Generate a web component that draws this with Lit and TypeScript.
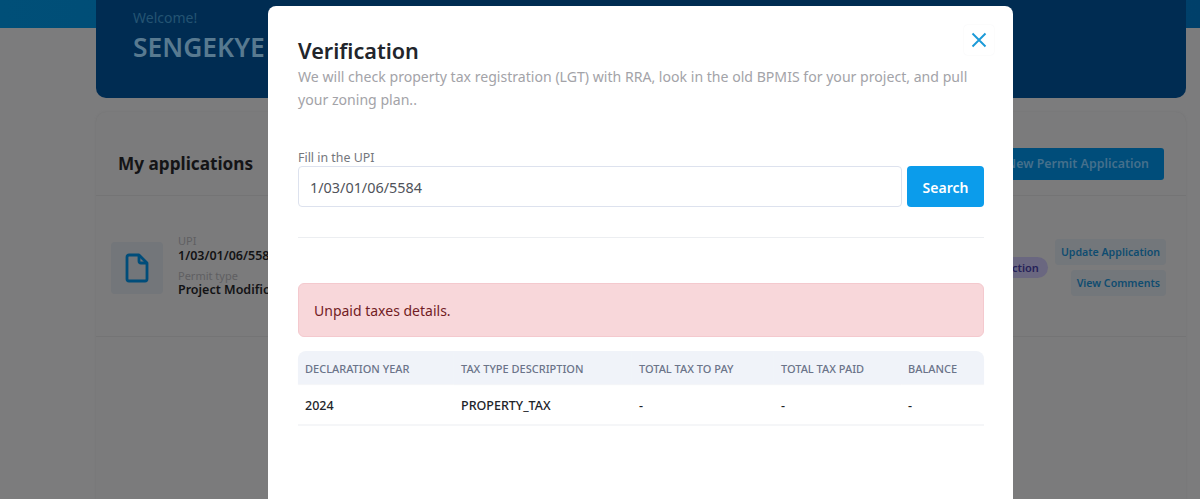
import { LitElement, html, css } from "lit";
import { customElement } from "lit/decorators.js";

const COLUMNS = [
  { label: "Declaration year", value: "2024", width: 156 },
  { label: "Tax type description", value: "PROPERTY_TAX", width: 178 },
  { label: "Total tax to pay", value: "-", width: 142 },
  { label: "Total tax paid", value: "-", width: 127 },
  { label: "Balance", value: "-", width: 83 },
];

@customElement("app-root")
export class AppRoot extends LitElement {
  static styles = css`
    :host {
      display: block;
      position: relative;
      height: 499px;
      overflow: hidden;
      background: #7c7c7d;
      font-family: "Noto Sans", "Open Sans", sans-serif;
      color: #1c1c1e;
    }

    /* dimmed page behind the modal */
    .topbar {
      position: absolute;
      inset: 0 0 auto 0;
      height: 28px;
      background: linear-gradient(90deg, #004f78 0%, #00406a 100%);
    }

    .page {
      position: relative;
      display: flex;
      flex-direction: column;
      gap: 14px;
      width: 1090px;
      margin-left: 96px;
    }

    .hero {
      height: 98px;
      box-sizing: border-box;
      padding: 9px 37px;
      background: #002c52;
      border-radius: 0 0 10px 10px;
    }

    .welcome {
      font-size: 14px;
      line-height: 17px;
      color: #245473;
    }

    .name {
      margin-top: 3px;
      font-size: 26.4px;
      line-height: 36px;
      font-weight: 600;
      color: #587a90;
    }

    .card {
      height: 400px;
      background: #7b7b7c;
      border-radius: 10px 10px 0 0;
      box-shadow: 0 0 2px #737374;
    }

    .card-head {
      display: flex;
      justify-content: space-between;
      align-items: center;
      height: 63px;
      padding: 20px 22px 0;
      border-bottom: 1px solid #747475;
    }

    .card-head h2 {
      margin: 0;
      font-size: 17.2px;
      font-weight: 700;
      color: #141416;
    }

    .new-btn {
      display: flex;
      align-items: center;
      justify-content: flex-end;
      width: 180px;
      height: 32px;
      box-sizing: border-box;
      padding-right: 15px;
      background: #004d7a;
      border-radius: 3px;
      font-size: 12.4px;
      font-weight: 600;
      color: #45708c;
    }

    .app-row {
      display: flex;
      justify-content: space-between;
      height: 141px;
      box-sizing: border-box;
      padding: 38px 20px 0 15px;
      border-bottom: 1px solid #747475;
    }

    .app-main {
      display: flex;
      gap: 15px;
    }

    .file-icon {
      display: flex;
      align-items: center;
      justify-content: center;
      width: 52px;
      height: 52px;
      margin-top: 8px;
      background: #73767a;
      border-radius: 4px;
    }

    .meta {
      font-size: 11px;
      line-height: 13px;
      color: #5f5f62;
    }

    .meta strong {
      display: block;
      margin-bottom: 5px;
      font-size: 12.5px;
      line-height: 16px;
      font-weight: 600;
      color: #131315;
    }

    .meta strong:first-of-type {
      margin-top: 1px;
    }

    .app-side {
      display: flex;
      align-items: flex-start;
      gap: 7px;
      padding-top: 5px;
    }

    .badge {
      margin-top: 18px;
      padding: 3px 9px;
      background: #6a6780;
      border-radius: 11px;
      font-size: 11px;
      font-weight: 600;
      color: #262158;
    }

    .actions {
      display: flex;
      flex-direction: column;
      align-items: flex-end;
      gap: 5px;
    }

    .action {
      padding: 5px 6px;
      background: #73777b;
      border-radius: 4px;
      font-size: 10.6px;
      line-height: 16px;
      font-weight: 600;
      color: #0f4c70;
    }

    /* modal */
    .modal {
      position: absolute;
      top: 6px;
      left: 268px;
      width: 745px;
      height: 560px;
      box-sizing: border-box;
      padding: 29px 29px 30px 30px;
      background: #fff;
      border-radius: 8px;
    }

    .close {
      position: absolute;
      top: 19px;
      right: 19px;
      display: flex;
      align-items: center;
      justify-content: center;
      width: 30px;
      height: 30px;
      border-radius: 4px;
      box-shadow: 0 0 2px #f1f1f3;
    }

    h1 {
      margin: 0;
      font-size: 21.6px;
      line-height: 31px;
      font-weight: 600;
      color: #22252b;
    }

    .intro {
      width: 680px;
      margin: 0;
      font-size: 14.1px;
      line-height: 22.5px;
      color: #a3a3a8;
    }

    label {
      display: block;
      margin-top: 38px;
      font-size: 12.4px;
      line-height: 17px;
      color: #74767c;
    }

    .search {
      display: flex;
      gap: 5px;
    }

    .input {
      flex: 1;
      height: 41px;
      box-sizing: border-box;
      padding: 1px 0 0 11px;
      display: flex;
      align-items: center;
      background: #fff;
      border: 1px solid #dde2ee;
      border-radius: 4px;
      font-size: 14.4px;
      color: #50535a;
    }

    .search-btn {
      display: flex;
      align-items: center;
      justify-content: center;
      width: 77px;
      height: 41px;
      box-sizing: border-box;
      padding-top: 2px;
      background: #0b9ceb;
      border-radius: 4px;
      font-size: 14px;
      font-weight: 600;
      color: #fff;
    }

    hr {
      margin: 30px 0 45px;
      border: 0;
      border-top: 1px solid #eceef1;
    }

    .alert {
      height: 54px;
      box-sizing: border-box;
      display: flex;
      align-items: center;
      padding: 0 15px;
      background: #f8d7da;
      border: 1px solid #f4c9ce;
      border-radius: 6px;
      font-size: 14px;
      color: #721c24;
    }

    .tax-table {
      margin-top: 14px;
      border-collapse: collapse;
      table-layout: fixed;
      width: 686px;
    }

    th {
      height: 32px;
      padding: 1px 0 0 7px;
      background: #f0f3f9;
      text-align: left;
      text-transform: uppercase;
      font-size: 11px;
      font-weight: 500;
      color: #6b7489;
      box-shadow: 0 1px 1px #f4f5f8;
    }

    th:first-child {
      border-top-left-radius: 8px;
    }

    th:last-child {
      border-top-right-radius: 8px;
    }

    td {
      height: 37px;
      padding: 3px 0 0 7px;
      border-bottom: 2px solid #f5f6f8;
      font-size: 12.5px;
      font-weight: 500;
      color: #212329;
    }
  `;

  render() {
    return html`
      <div class="topbar"></div>
      <div class="page">
        <header class="hero">
          <div class="welcome">Welcome!</div>
          <div class="name">SENGEKYE</div>
        </header>
        <section class="card">
          <div class="card-head">
            <h2>My applications</h2>
            <div class="new-btn">New Permit Application</div>
          </div>
          <div class="app-row">
            <div class="app-main">
              <div class="file-icon">
                <svg width="24" height="30" viewBox="0 0 24 30" fill="none" stroke="#004d7a" stroke-width="2.8" stroke-linejoin="round">
                  <path d="M4 2h10l8 8v16a2 2 0 0 1-2 2H4a2 2 0 0 1-2-2V4a2 2 0 0 1 2-2z" />
                  <path d="M14 2v6a2 2 0 0 0 2 2h6" />
                </svg>
              </div>
              <div class="meta">
                UPI
                <strong>1/03/01/06/5584</strong>
                Permit type
                <strong>Project Modification</strong>
              </div>
            </div>
            <div class="app-side">
              <span class="badge">Under Correction</span>
              <div class="actions">
                <span class="action">Update Application</span>
                <span class="action">View Comments</span>
              </div>
            </div>
          </div>
        </section>
      </div>

      <div class="modal">
        <div class="close">
          <svg width="16" height="16" viewBox="0 0 16 16" fill="none" stroke="#1b9ad8" stroke-width="1.9">
            <path d="M1.5 1.5l13 13M14.5 1.5l-13 13" />
          </svg>
        </div>
        <h1>Verification</h1>
        <p class="intro">
          We will check property tax registration (LGT) with RRA, look in the
          old BPMIS for your project, and pull your zoning plan..
        </p>
        <label>Fill in the UPI</label>
        <div class="search">
          <div class="input">1/03/01/06/5584</div>
          <div class="search-btn">Search</div>
        </div>
        <hr />
        <div class="alert">Unpaid taxes details.</div>
        <table class="tax-table">
          <colgroup>
            ${COLUMNS.map((c) => html`<col style="width: ${c.width}px" />`)}
          </colgroup>
          <thead>
            <tr>${COLUMNS.map((c) => html`<th>${c.label}</th>`)}</tr>
          </thead>
          <tbody>
            <tr>${COLUMNS.map((c) => html`<td>${c.value}</td>`)}</tr>
          </tbody>
        </table>
      </div>
    `;
  }
}
